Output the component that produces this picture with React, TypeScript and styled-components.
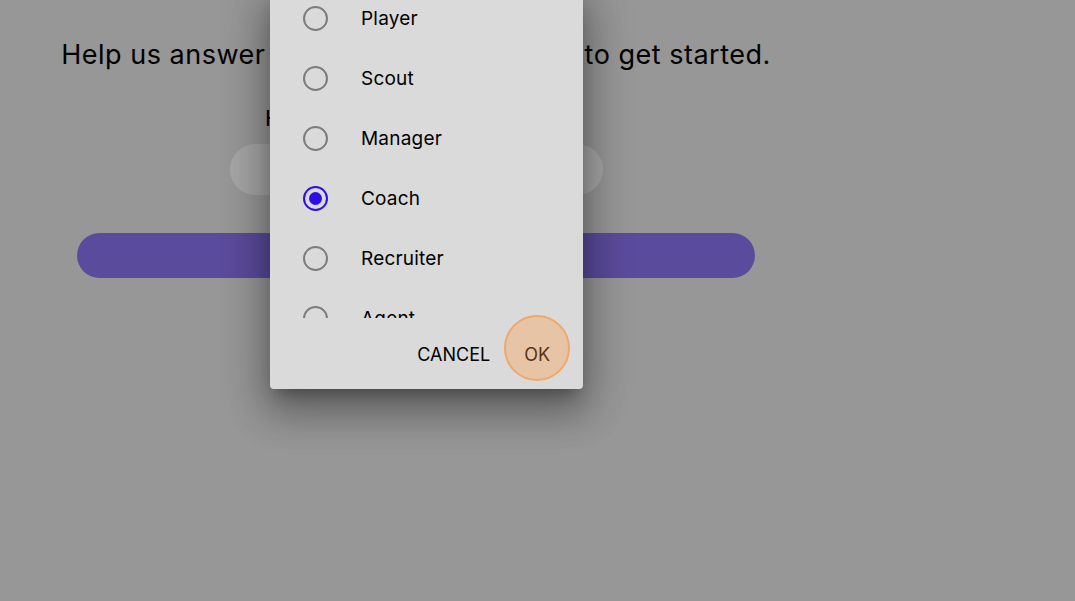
import React from "react";
import styled, { createGlobalStyle } from "styled-components";

const GlobalStyle = createGlobalStyle`
  html, body { margin: 0; padding: 0; }
  body {
    background: #979797;
    font-family: Inter, "Noto Sans", Roboto, sans-serif;
    color: #000;
    overflow: hidden;
  }
`;

const Page = styled.div`
  position: relative;
  width: 1075px;
  height: 601px;
  overflow: hidden;
  background: #979797;
`;

const Column = styled.main`
  width: 832px;
  display: flex;
  flex-direction: column;
  align-items: center;
  padding-top: 39px;
`;

const Title = styled.h1`
  margin: 0;
  font-size: 27px;
  font-weight: 400;
  letter-spacing: 0.5px;
  line-height: 32px;
  white-space: nowrap;
`;

const Label = styled.p`
  margin: 33px 0 0;
  font-size: 22px;
  letter-spacing: -0.4px;
  line-height: 28px;
  white-space: nowrap;
`;

const Field = styled.div`
  margin-top: 12px;
  width: 373px;
  height: 51px;
  border-radius: 26px;
  background: #a6a6a6;
`;

const Primary = styled.button`
  margin-top: 38px;
  width: 678px;
  height: 45px;
  border: none;
  border-radius: 23px;
  background: #5b4b9c;
  color: #fff;
  font: inherit;
  font-size: 18px;
`;

const Dialog = styled.div`
  position: absolute;
  left: 270px;
  top: -12px;
  width: 313px;
  background: #dadada;
  border-radius: 4px;
  box-shadow: 0 11px 15px -7px rgba(0, 0, 0, 0.3),
    0 24px 38px 3px rgba(0, 0, 0, 0.22), 0 9px 46px 8px rgba(0, 0, 0, 0.2);
  display: flex;
  flex-direction: column;
`;

const List = styled.div`
  height: 330px;
  overflow: hidden;
  display: flex;
  flex-direction: column;
`;

const Row = styled.label`
  flex: 0 0 60px;
  display: flex;
  align-items: center;
  padding-left: 33px;
  gap: 33px;
  font-size: 19px;
  letter-spacing: 0.2px;
`;

const Radio = styled.span<{ $on?: boolean }>`
  box-sizing: border-box;
  width: 25px;
  height: 25px;
  border-radius: 50%;
  border: 2px solid ${(p) => (p.$on ? "#2c0ee6" : "#7d7d7d")};
  display: flex;
  align-items: center;
  justify-content: center;
  &::after {
    content: "";
    width: 13px;
    height: 13px;
    border-radius: 50%;
    background: #2c0ee6;
    display: ${(p) => (p.$on ? "block" : "none")};
  }
`;

const Actions = styled.div`
  height: 71px;
  box-sizing: border-box;
  display: flex;
  align-items: center;
  justify-content: flex-end;
  padding: 0 21px 12px 0;
  gap: 10px;
`;

const ActionButton = styled.button<{ $focused?: boolean }>`
  position: relative;
  border: none;
  background: transparent;
  font: inherit;
  font-size: 18px;
  letter-spacing: 0;
  color: ${(p) => (p.$focused ? "#5a3312" : "#000")};
  padding: 14px 12px 0;
  cursor: pointer;
  &::before {
    content: "";
    display: ${(p) => (p.$focused ? "block" : "none")};
    position: absolute;
    left: 50%;
    top: 50%;
    width: 62px;
    height: 62px;
    margin: -33px 0 0 -33px;
    border-radius: 50%;
    background: #e6c4a5;
    border: 2px solid #f0a86a;
  }
  span {
    position: relative;
  }
`;

const roles = ["Player", "Scout", "Manager", "Coach", "Recruiter", "Agent", "Parent"];

export default function App() {
  return (
    <Page>
      <GlobalStyle />
      <Column>
        <Title>Help us answer a few simple questions to get started.</Title>
        <Label>How would you describe you?</Label>
        <Field />
        <Primary>CONTINUE</Primary>
      </Column>
      <Dialog role="dialog">
        <List>
          {roles.map((r) => (
            <Row key={r}>
              <Radio $on={r === "Coach"} />
              {r}
            </Row>
          ))}
        </List>
        <Actions>
          <ActionButton>
            <span>CANCEL</span>
          </ActionButton>
          <ActionButton $focused>
            <span>OK</span>
          </ActionButton>
        </Actions>
      </Dialog>
    </Page>
  );
}
